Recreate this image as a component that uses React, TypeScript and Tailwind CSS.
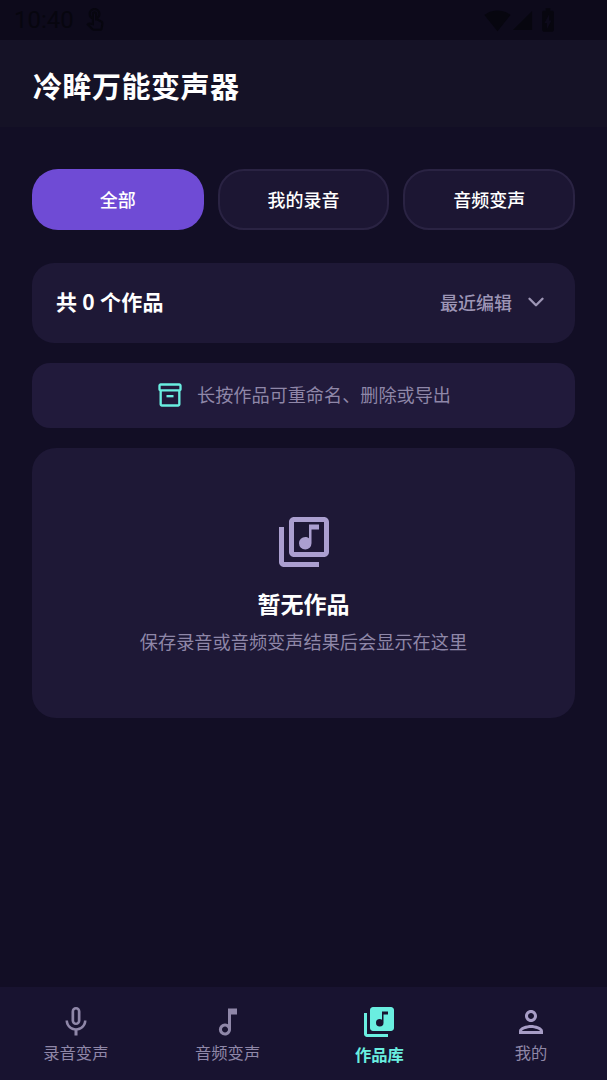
import { ChevronDown } from "lucide-react";
import {
  MdLibraryMusic,
  MdMicNone,
  MdOutlineInventory2,
  MdOutlineLibraryMusic,
  MdOutlineMusicNote,
  MdOutlinePerson,
  MdOutlineTouchApp,
  MdSignalCellular4Bar,
  MdSignalWifi4Bar,
  MdBatteryChargingFull,
} from "react-icons/md";

const font = "font-['Noto_Sans_CJK_SC','Noto_Sans',sans-serif]";

const StatusBar = () => (
  <div className="flex h-10 items-center justify-between bg-[#0d0a1b] pl-[14px] pr-[45px] text-[#07060f]">
    <div className="flex items-center gap-[8px]">
      <span className="font-['Roboto',sans-serif] text-[24px] leading-none">10:40</span>
      <MdOutlineTouchApp className="h-[26px] w-[26px]" />
    </div>
    <div className="flex items-center">
      <MdSignalWifi4Bar className="h-[27px] w-[27px]" />
      <MdSignalCellular4Bar className="h-[23px] w-[23px]" />
      <MdBatteryChargingFull className="h-[28px] w-[28px]" />
    </div>
  </div>
);

const Tab = ({ label, active }: { label: string; active?: boolean }) => (
  <div
    className={
      active
        ? "flex h-[61px] items-center justify-center rounded-[26px] bg-[#6f4bd5] text-[18px] font-medium text-white"
        : "flex h-[61px] items-center justify-center rounded-[26px] border-2 border-[#2a2343] bg-[#1c1633] text-[18px] font-medium text-white"
    }
  >
    {label}
  </div>
);

const NavItem = ({
  icon,
  label,
  active,
}: {
  icon: React.ReactNode;
  label: string;
  active?: boolean;
}) => (
  <div className="flex flex-1 flex-col items-center">
    {icon}
    <span
      className={
        active
          ? "mt-[3px] text-[16.3px] font-bold leading-[22px] text-[#6aeee0]"
          : "mt-[1px] text-[16.3px] leading-[22px] text-[#8f87a8]"
      }
    >
      {label}
    </span>
  </div>
);

export default function App() {
  return (
    <div className={`flex h-[1080px] w-[607px] flex-col overflow-hidden bg-[#120e25] ${font}`}>
      <StatusBar />

      <header className="flex h-[87px] items-center bg-[#151226] px-[33px] pt-[3px]">
        <h1 className="text-[29px] font-bold leading-none tracking-[0.5px] text-white">冷眸万能变声器</h1>
      </header>

      <main className="flex flex-1 flex-col px-[32px] pt-[42px]">
        <div className="grid grid-cols-3 gap-[14px]">
          <Tab label="全部" active />
          <Tab label="我的录音" />
          <Tab label="音频变声" />
        </div>

        <div className="mt-[33px] flex h-[80px] items-center justify-between rounded-[22px] bg-[#1e1836] pb-[2px] pl-[24px] pr-[26px]">
          <span className="text-[21px] font-bold tracking-[0.25px] text-white">共 0 个作品</span>
          <div className="flex items-center gap-[11px] text-[#9d95b5]">
            <span className="text-[18px] font-medium">最近编辑</span>
            <ChevronDown className="h-[26px] w-[26px]" strokeWidth={2.2} />
          </div>
        </div>

        <div className="mt-[20px] flex h-[65px] items-center justify-center gap-[13px] rounded-[18px] bg-[#211a3b] pb-[2px]">
          <MdOutlineInventory2 className="h-[28px] w-[28px] text-[#6aeee0]" />
          <span className="text-[18.15px] text-[#8f87a8]">长按作品可重命名、删除或导出</span>
        </div>

        <div className="mt-[20px] flex h-[270px] flex-col items-center rounded-[24px] bg-[#1e1836] pt-[64px]">
          <MdOutlineLibraryMusic className="h-[60px] w-[60px] text-[#ab9fd0]" />
          <p className="mt-[15px] text-[23px] font-bold leading-[32px] text-white">暂无作品</p>
          <p className="mt-[9px] text-[18.2px] leading-[26px] text-[#8f87a8]">保存录音或音频变声结果后会显示在这里</p>
        </div>
      </main>

      <nav className="flex h-[93px] bg-[#181330] px-0 pt-[17px]">
        <NavItem label="录音变声" icon={<MdMicNone className="h-[36px] w-[36px] text-[#8f87a8]" />} />
        <NavItem label="音频变声" icon={<MdOutlineMusicNote className="h-[36px] w-[36px] text-[#8f87a8]" />} />
        <NavItem label="作品库" active icon={<MdLibraryMusic className="h-[36px] w-[36px] text-[#6aeee0]" />} />
        <NavItem label="我的" icon={<MdOutlinePerson className="h-[36px] w-[36px] text-[#a79dc6]" />} />
      </nav>
    </div>
  );
}
